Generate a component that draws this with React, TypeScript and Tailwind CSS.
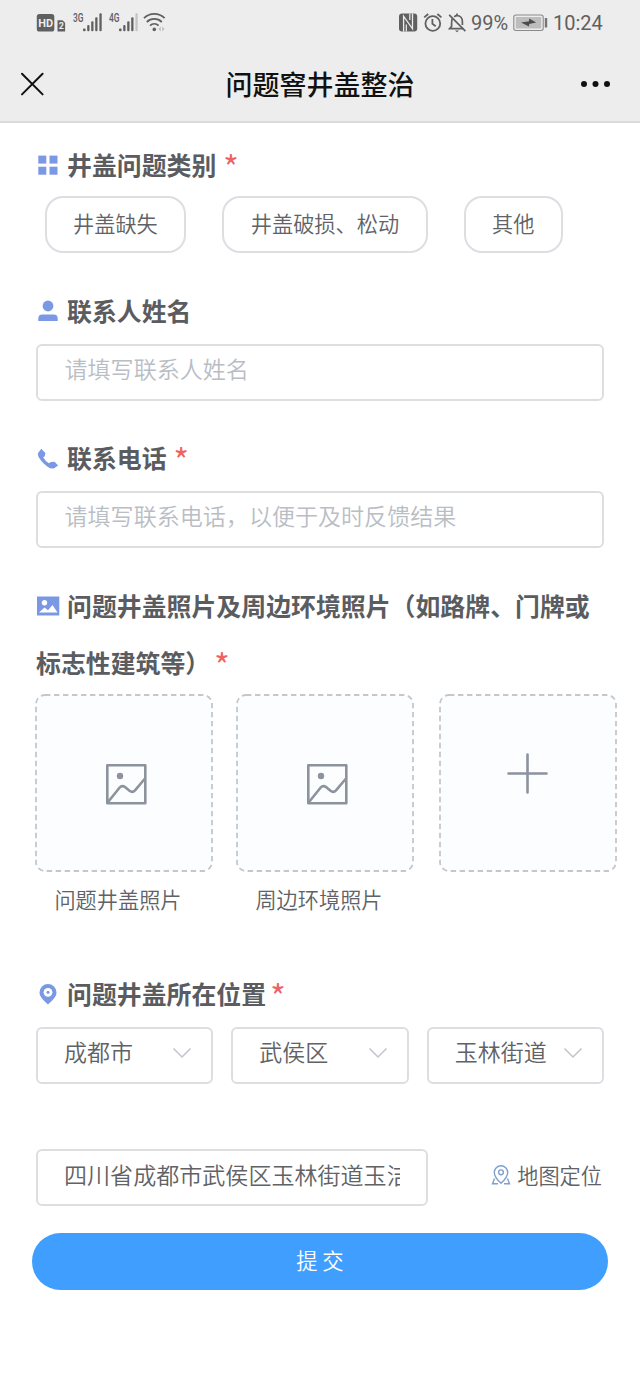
import type { ReactNode } from 'react'
import clsx from 'clsx'

const PROBLEM_TYPES = ['井盖缺失', '井盖破损、松动', '其他']
const REGIONS = ['成都市', '武侯区', '玉林街道']

function SignalIcon({ label, weak }: { label: string; weak?: boolean }): ReactNode {
  return (
    <svg className="h-[22px] w-[30px]" viewBox="0 0 30 22" fill="#606060">
      <text x="0" y="9.5" fontSize="12" fontWeight="500" fontFamily="Roboto, sans-serif" textLength="10.5" lengthAdjust="spacingAndGlyphs">
        {label}
      </text>
      <rect x="10" y="16.5" width="2.6" height="2.8" rx="1" />
      <rect x="14.2" y="13" width="2.3" height="6.3" rx="1" />
      <rect x="18.2" y="9.2" width="2.3" height="10.1" rx="1" />
      <rect x="22.2" y="5.2" width="2.3" height="14.1" rx="1" />
      <rect x="26.4" y="1.2" width="2.3" height="18.1" rx="1" fill={weak ? '#c4c4c4' : '#606060'} />
    </svg>
  )
}

function StatusBar(): ReactNode {
  return (
    <div className="flex h-[46px] items-center justify-between px-[36px] text-[#606060]">
      <div className="flex items-center">
        <svg className="h-[22px] w-[30px]" viewBox="0 0 30 22">
          <rect x="0.8" y="2" width="17.5" height="17.5" rx="2.6" fill="#606060" />
          <text x="2.2" y="14.8" fontSize="11.5" fontWeight="700" fontFamily="Roboto, sans-serif" fill="#ededed" textLength="14.8" lengthAdjust="spacingAndGlyphs">
            HD
          </text>
          <path d="M21.5 8.2h5l2.6 2.6v8.6h-7.6z" fill="#606060" />
          <text x="22.8" y="17.4" fontSize="9" fontWeight="700" fontFamily="Roboto, sans-serif" fill="#ededed">
            2
          </text>
        </svg>
        <div className="ml-[6.5px] flex gap-[6px]">
          <SignalIcon label="3G" />
          <SignalIcon label="4G" weak />
        </div>
        <svg className="ml-[4.5px] h-[22px] w-[24px]" viewBox="0 0 24 22" fill="none" stroke="#606060" strokeWidth="1.8">
          <path d="M1 6.2a14.5 14.5 0 0 1 20.6 0" />
          <path d="M3.8 10a10.7 10.7 0 0 1 15 0" />
          <path d="M7 13.6a6.4 6.4 0 0 1 8.6 0" />
          <circle cx="11.3" cy="17.4" r="1.8" fill="#606060" stroke="none" />
          <path d="M17.8 14.6l-2.4 2.4 2.4 2.4zM19.2 14.6l2.4 2.4-2.4 2.4z" fill="#c0c0c0" stroke="none" />
        </svg>
      </div>
      <div className="flex items-center font-[Roboto,sans-serif] text-[20px] font-normal">
        <svg className="h-[22px] w-[20px]" viewBox="0 0 20 22">
          <rect x="1" y="1.5" width="18.2" height="18" rx="3" fill="#606060" />
          <path d="M5.6 19.5V4.2l8.9 12.6V1.5" fill="none" stroke="#ededed" strokeWidth="1.3" />
          <path d="M8.3 19.5v-7M11.8 1.5v6.5" stroke="#ededed" strokeWidth="1.2" />
        </svg>
        <svg className="ml-[5px] h-[22px] w-[20px]" viewBox="0 0 20 22" fill="none" stroke="#606060" strokeWidth="1.8">
          <circle cx="9.8" cy="11.5" r="7.4" />
          <path d="M9.4 7v4.8l3.3 2.4M1.2 5.4l4-3.4M18.4 5.4l-4-3.4" />
        </svg>
        <svg className="ml-[5px] h-[22px] w-[20px]" viewBox="0 0 20 22" fill="none" stroke="#606060" strokeWidth="1.7">
          <path d="M4.2 6.5C3.7 8 3.6 9.5 3.6 11v3.4l-2 2.3h13.6" />
          <path d="M6.2 4.8C7.1 4 8 3.7 9 3.7c3.3 0 5.4 2.6 5.4 6v3.3" />
          <path d="M9 1.4v2.2M1.2 2.8l16.2 16.4" />
          <path d="M7 18.6h4l-2 1.6z" fill="#606060" stroke="none" />
        </svg>
        <span className="ml-[3px] w-[37px]">99%</span>
        <svg className="ml-[5px] h-[20px] w-[36px]" viewBox="0 0 36 20">
          <rect x="0.8" y="2" width="29.4" height="15.5" rx="2.2" fill="#ededed" stroke="#8a8a8a" strokeWidth="1.1" />
          <rect x="2.8" y="4" width="25.4" height="11.5" fill="#bdbdbd" />
          <path d="M8 9.6l8-1.4.2-2.7 7 4-7 1.4-.2 2.7z" fill="#4c4c4c" />
          <rect x="31.8" y="5" width="2.4" height="9.5" rx="0.6" fill="#757575" />
        </svg>
        <span className="ml-[4px] w-[51px]">10:24</span>
      </div>
    </div>
  )
}

function NavBar(): ReactNode {
  return (
    <div className="flex h-[75px] items-center justify-between pr-[29px] pl-[20px]">
      <svg className="h-[24px] w-[40px]" viewBox="0 0 40 24" stroke="#111" strokeWidth="2" strokeLinecap="round">
        <path d="M2 1.8l20.6 20.6M22.6 1.8L2 22.4" />
      </svg>
      <h1 className="text-[27px] leading-[40px] font-medium text-[#111]">问题窨井盖整治</h1>
      <svg className="h-[24px] w-[31px]" viewBox="0 0 31 24" fill="#111">
        <circle cx="4" cy="12" r="3" />
        <circle cx="15.5" cy="12" r="3" />
        <circle cx="27" cy="12" r="3" />
      </svg>
    </div>
  )
}

function Label({ icon, children }: { icon: ReactNode; children: ReactNode }): ReactNode {
  return (
    <p className="text-[24.9px] leading-[57px] font-bold whitespace-nowrap text-[#5a5c5f]">
      <svg className="relative -top-[3px] mr-[7px] inline-block h-[24px] w-[24px] align-middle" viewBox="0 0 24 24" fill="#7b98e5">
        {icon}
      </svg>
      {children}
    </p>
  )
}

function Required({ className }: { className?: string }): ReactNode {
  return <span className={clsx('inline-block align-[-5px] text-[33px] leading-none font-normal text-[#ee6464]', className)}>*</span>
}

function Field({ children }: { children: ReactNode }): ReactNode {
  return (
    <div className="flex h-[57px] items-center rounded-[6px] border-2 border-[#dcdee2] pb-[8px] pl-[26.5px] text-[23.05px] text-[#b9bdc4]">
      {children}
    </div>
  )
}

function UploadBox({ children, caption, className }: { children: ReactNode; caption?: string; className?: string }): ReactNode {
  return (
    <div className={clsx('w-[178px]', className)}>
      <svg className="h-[178px] w-[178px]" viewBox="0 0 178 178" fill="none">
        <rect x="1" y="1" width="176" height="176" rx="9" fill="#fbfdff" stroke="#c3c8cd" strokeWidth="1.8" strokeDasharray="5.4 3.6" />
        {children}
      </svg>
      {caption && <p className="pl-[19px] text-[21.2px] leading-[54px] text-[#606266]">{caption}</p>}
    </div>
  )
}

function PictureGlyph(): ReactNode {
  return (
    <g stroke="#8c939d" strokeWidth="2.6" strokeLinejoin="round">
      <rect x="72.3" y="71.3" width="38" height="38" />
      <path d="M73 108l11.5-14.2q2.5-3 5.5-.8l4.5 3.8q3 2.4 5.5-.4L110 84.5" />
      <circle cx="85" cy="82" r="3.2" fill="#8c939d" stroke="none" />
    </g>
  )
}

export default function App(): ReactNode {
  return (
    <div className="h-[1387px] w-[640px] overflow-hidden bg-white font-['Noto_Sans_CJK_SC',sans-serif] font-[350]">
      <header className="h-[123px] border-b-2 border-[#dadada] bg-[#ededed]">
        <StatusBar />
        <NavBar />
      </header>

      <main className="px-[36px] pt-[13px]">
        <Label
          icon={
            <>
              <rect x="2.3" y="2.6" width="8" height="8" />
              <rect x="13.5" y="2.6" width="8" height="8" />
              <rect x="2.3" y="13.7" width="8" height="8" />
              <rect x="13.5" y="13.7" width="8" height="8" />
            </>
          }
        >
          井盖问题类别
          <Required className="ml-[7px]" />
        </Label>
        <div className="mt-[3px] ml-[8.5px] flex gap-[36px]">
          {PROBLEM_TYPES.map((type) => (
            <button key={type} className="h-[57px] rounded-[18px] border-2 border-[#dcdee2] px-[26.5px] pb-[3px] text-[21.2px] text-[#606266]">
              {type}
            </button>
          ))}
        </div>

        <div className="mt-[29px]">
          <Label
            icon={
              <>
                <circle cx="12" cy="7" r="5.4" />
                <path d="M2.3 22v-2.6q0-4 4-4h11.4q4 0 4 4V22z" />
              </>
            }
          >
            联系人姓名
          </Label>
        </div>
        <div className="mt-[5px]">
          <Field>请填写联系人姓名</Field>
        </div>

        <div className="mt-[28px]">
          <Label icon={<path d="M5.3 2.8l4 4.2-.5 3.2-1.6 1q1.8 3.6 5.6 6l2.2-1.3 3.6-.1 3.5 3.8-4.3 3-3.9-.3Q6.5 18 2.3 10.6l-.4-3.3z" />}>
            联系电话
            <Required className="ml-[7px]" />
          </Label>
        </div>
        <div className="mt-[5px]">
          <Field>请填写联系电话，以便于及时反馈结果</Field>
        </div>

        <div className="mt-[29px]">
          <Label
            icon={
              <>
                <path d="M1 2.5h22.3v19H1z" />
                <circle cx="8.5" cy="8.8" r="2.7" fill="#fff" />
                <path d="M3 18.5l5.5-5 3.5 2.7 4.5-5.2 5 7.5z" fill="#fff" />
              </>
            }
          >
            问题井盖照片及周边环境照片（如路牌、门牌或
            <br />
            标志性建筑等）
            <Required className="ml-[4px]" />
          </Label>
        </div>
        <div className="mt-[3px] -mr-[13px] -ml-[0.6px] flex">
          <UploadBox caption="问题井盖照片">
            <PictureGlyph />
          </UploadBox>
          <UploadBox caption="周边环境照片" className="ml-[23px]">
            <PictureGlyph />
          </UploadBox>
          <UploadBox className="ml-[24.6px]">
            <path d="M88.5 60.5v38M69.5 79.5h38" stroke="#8c939d" strokeWidth="2.6" strokeLinecap="round" />
          </UploadBox>
        </div>

        <div className="mt-[39px]">
          <Label
            icon={
              <>
                <path d="M12 2a8.5 8.5 0 0 1 8.5 8.5c0 4-3.5 7.5-8.5 12-5-4.5-8.5-8-8.5-12A8.5 8.5 0 0 1 12 2z" />
                <circle cx="12" cy="10.3" r="4.4" fill="#fff" />
                <circle cx="12" cy="10.3" r="1.5" />
              </>
            }
          >
            问题井盖所在位置
            <Required className="ml-[4px]" />
          </Label>
        </div>
        <div className="mt-[5px] grid grid-cols-3 gap-[18px]">
          {REGIONS.map((region) => (
            <div
              key={region}
              className="flex h-[57px] items-center justify-between rounded-[6px] border-2 border-[#dcdee2] pr-[19px] pb-[5px] pl-[26px] text-[23px] text-[#606266]"
            >
              <span className="pb-[4px]">{region}</span>
              <svg className="h-[12px] w-[20px]" viewBox="0 0 20 12" fill="none" stroke="#c0c4cc" strokeWidth="1.5">
                <path d="M1.5 1.5l8.5 8.5 8.5-8.5" />
              </svg>
            </div>
          ))}
        </div>

        <div className="mt-[65px] flex items-center justify-between">
          <div className="h-[57px] w-[392px] rounded-[6px] border-2 border-[#dcdee2] px-[26px] text-[23.05px] leading-[47px] text-[#606266]">
            <div className="overflow-hidden whitespace-nowrap">四川省成都市武侯区玉林街道玉洁</div>
          </div>
          <div className="flex items-center pr-[2px] pb-[5px] text-[21.2px] text-[#606266]">
            <svg className="mr-[6px] h-[20px] w-[20px]" viewBox="0 0 20 20" fill="none" stroke="#7f9fd0" strokeWidth="1.4">
              <path d="M10 18.3C6 14.5 3.3 11 3.3 7.4a6.7 6.7 0 0 1 13.4 0c0 3.6-2.7 7.1-6.7 10.9z" />
              <circle cx="10" cy="7.3" r="2.4" />
              <path d="M3.5 13.5L1.5 18.8h5.5M16.5 13.5l2 5.3H13" />
            </svg>
            地图定位
          </div>
        </div>

        <button className="-mx-[4px] mt-[27px] flex h-[57px] w-[576px] items-center justify-center rounded-full bg-[#409eff] pb-[3px] text-[21.3px] text-white">
          提 交
        </button>
      </main>
    </div>
  )
}
